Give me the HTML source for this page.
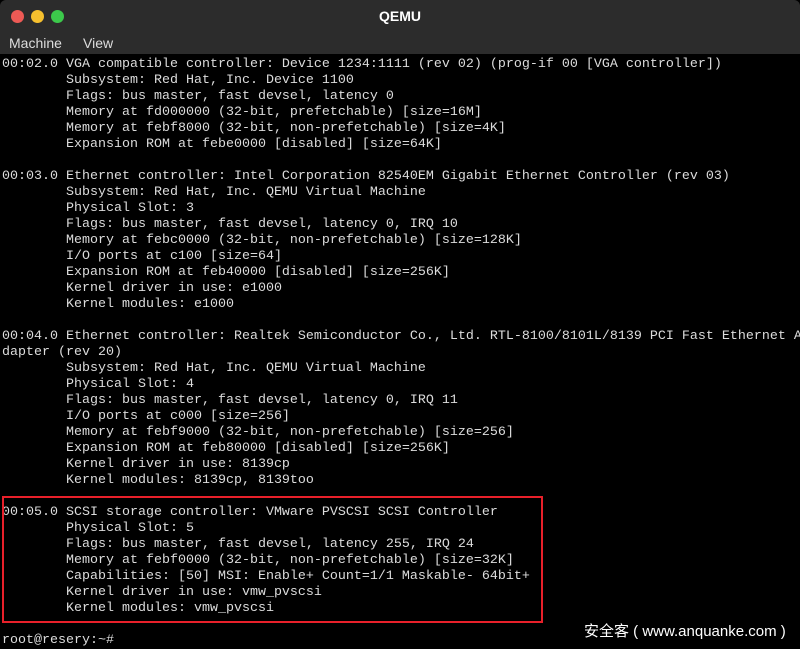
<!DOCTYPE html>
<html><head><meta charset="utf-8"><style>
html,body{margin:0;padding:0;width:800px;height:648px;overflow:hidden;background:#000}
#title{position:absolute;left:0;top:0;width:800px;height:31px;background:#2c2c2c;border-radius:6px 6px 0 0}
.dot{position:absolute;top:10px;width:13px;height:13px;border-radius:50%}
#t{position:absolute;left:0;width:800px;top:8px;text-align:center;color:#fff;font:bold 14px "Liberation Sans",sans-serif}
#menu{position:absolute;left:0;top:31px;width:800px;height:23px;background:#2c2c2c;color:#ddd;font:14px "Liberation Sans",sans-serif}
#menu span{position:absolute;top:4px}
pre{position:absolute;left:2px;top:57px;margin:0;color:#dcdcdc;font:13.33px/16px "Liberation Mono",monospace;white-space:pre;letter-spacing:0}
#box{position:absolute;left:2px;top:496px;width:537px;height:123px;border:2px solid #e8202a}
#wm{position:absolute;left:584px;top:620px;color:#fff;font:15px "Liberation Sans","Noto Sans CJK SC",sans-serif}
</style></head><body>
<div id="title">
<div class="dot" style="left:11px;background:#ed5a55"></div>
<div class="dot" style="left:31px;background:#f6c02e"></div>
<div class="dot" style="left:51px;background:#3cc94b"></div>
<div id="t">QEMU</div>
</div>
<div id="menu"><span style="left:9px">Machine</span><span style="left:83px">View</span></div>
<pre>00:02.0 VGA compatible controller: Device 1234:1111 (rev 02) (prog-if 00 [VGA controller])
        Subsystem: Red Hat, Inc. Device 1100
        Flags: bus master, fast devsel, latency 0
        Memory at fd000000 (32-bit, prefetchable) [size=16M]
        Memory at febf8000 (32-bit, non-prefetchable) [size=4K]
        Expansion ROM at febe0000 [disabled] [size=64K]

00:03.0 Ethernet controller: Intel Corporation 82540EM Gigabit Ethernet Controller (rev 03)
        Subsystem: Red Hat, Inc. QEMU Virtual Machine
        Physical Slot: 3
        Flags: bus master, fast devsel, latency 0, IRQ 10
        Memory at febc0000 (32-bit, non-prefetchable) [size=128K]
        I/O ports at c100 [size=64]
        Expansion ROM at feb40000 [disabled] [size=256K]
        Kernel driver in use: e1000
        Kernel modules: e1000

00:04.0 Ethernet controller: Realtek Semiconductor Co., Ltd. RTL-8100/8101L/8139 PCI Fast Ethernet A
dapter (rev 20)
        Subsystem: Red Hat, Inc. QEMU Virtual Machine
        Physical Slot: 4
        Flags: bus master, fast devsel, latency 0, IRQ 11
        I/O ports at c000 [size=256]
        Memory at febf9000 (32-bit, non-prefetchable) [size=256]
        Expansion ROM at feb80000 [disabled] [size=256K]
        Kernel driver in use: 8139cp
        Kernel modules: 8139cp, 8139too

00:05.0 SCSI storage controller: VMware PVSCSI SCSI Controller
        Physical Slot: 5
        Flags: bus master, fast devsel, latency 255, IRQ 24
        Memory at febf0000 (32-bit, non-prefetchable) [size=32K]
        Capabilities: [50] MSI: Enable+ Count=1/1 Maskable- 64bit+
        Kernel driver in use: vmw_pvscsi
        Kernel modules: vmw_pvscsi

root@resery:~#</pre>
<div id="box"></div>
<div id="wm">安全客 ( www.anquanke.com )</div>
</body></html>
